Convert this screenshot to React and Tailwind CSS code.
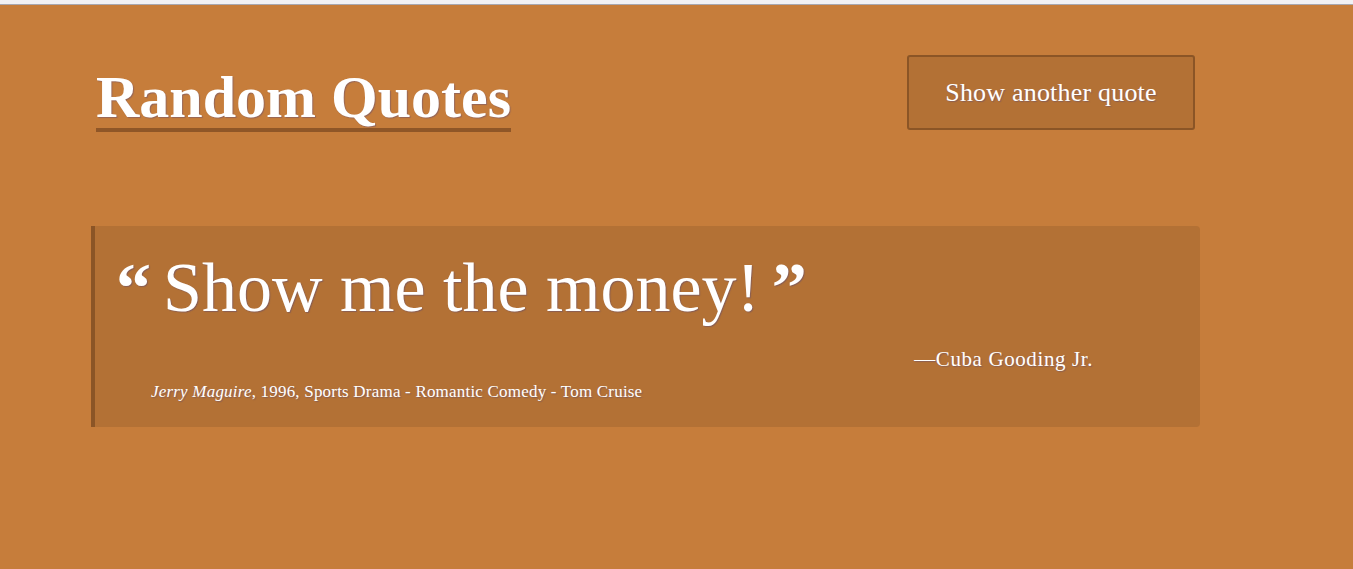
// App.jsx
import React from 'react';

const QUOTE = {
    text: 'Show me the money!',
    author: 'Cuba Gooding Jr.',
    film: 'Jerry Maguire',
    year: '1996',
    genre: 'Sports Drama - Romantic Comedy',
    star: 'Tom Cruise',
};

const shadow = '[text-shadow:1px_1px_1px_rgba(60,60,140,0.35)]';

export default function App() {
    return (
        <div className="min-h-screen bg-[#c67d3b] font-['Liberation_Serif',serif] text-white">
            {/* barra superior del navegador */}
            <div className="h-[5px] bg-[#f1f1f4] border-b border-[#a8a8b0]" />

            <div className="w-[1109px] ml-[91px]">
                {/* --- cabecera --- */}
                <header className="flex items-start justify-between pt-[50px] px-[5px]">
                    <h1 className={`inline-block mt-[11px] text-[60px] leading-[62px] font-bold border-b-4 border-[#8f5627] ${shadow}`}>
                        Random Quotes
                    </h1>
                    <button
                        className={`w-[288px] h-[75px] bg-[#b37135] border-2 border-[#8b5526] rounded-[3px] text-[26px] tracking-[0.2px] ${shadow}`}
                    >
                        Show another quote
                    </button>
                </header>

                {/* --- tarjeta de la cita --- */}
                <blockquote className="mt-[94px] bg-[#b37135] border-l-4 border-[#8b5526] rounded-r-[4px] pl-[21px] pt-[20px] pb-[23px]">
                    <p className={`text-[70px] leading-[84px] ${shadow}`}>
                        <span className="font-bold mr-[12px]">&ldquo;</span>
                        {QUOTE.text}
                        <span className="font-bold ml-[12px]">&rdquo;</span>
                    </p>
                    <p className={`mt-[15px] text-right pr-[107px] text-[21px] leading-[28px] tracking-[0.6px] ${shadow}`}>
                        &mdash;{QUOTE.author}
                    </p>
                    <p className={`mt-[7px] ml-[35px] text-[17px] leading-[24px] tracking-[0.2px] ${shadow}`}>
                        <cite className="italic">{QUOTE.film}</cite>, {QUOTE.year}, {QUOTE.genre} - {QUOTE.star}
                    </p>
                </blockquote>
            </div>
        </div>
    );
}
